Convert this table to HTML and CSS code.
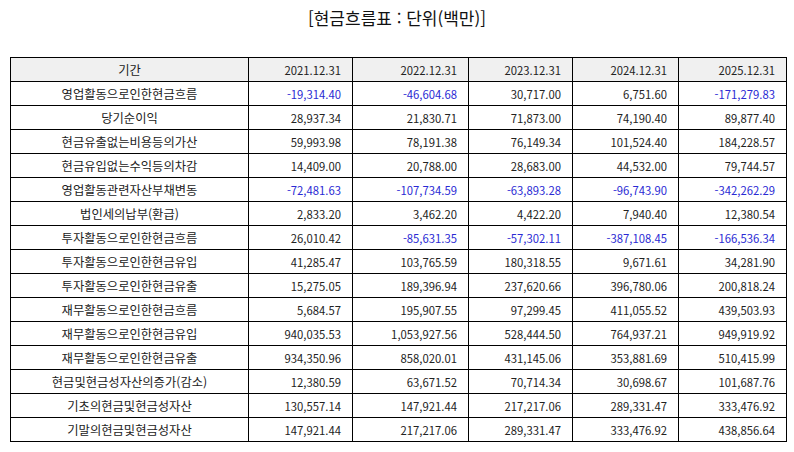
FILE: index.html
```html
<!DOCTYPE html>
<html lang="ko">
<head>
<meta charset="utf-8">
<link rel="stylesheet" href="styles.css">
</head>
<body>
<div class="page">
  <h1 class="title">[현금흐름표 : 단위(백만)]</h1>
  <table class="grid">
    <colgroup>
      <col class="c-label"><col class="c1"><col class="c2"><col class="c3"><col class="c4"><col class="c5">
    </colgroup>
    <thead>
      <tr><th class="lbl">기간</th><th>2021.12.31</th><th>2022.12.31</th><th>2023.12.31</th><th>2024.12.31</th><th>2025.12.31</th></tr>
    </thead>
    <tbody>
      <tr><td class="lbl">영업활동으로인한현금흐름</td><td class="neg">-19,314.40</td><td class="neg">-46,604.68</td><td>30,717.00</td><td>6,751.60</td><td class="neg">-171,279.83</td></tr>
      <tr><td class="lbl">당기순이익</td><td>28,937.34</td><td>21,830.71</td><td>71,873.00</td><td>74,190.40</td><td>89,877.40</td></tr>
      <tr><td class="lbl">현금유출없는비용등의가산</td><td>59,993.98</td><td>78,191.38</td><td>76,149.34</td><td>101,524.40</td><td>184,228.57</td></tr>
      <tr><td class="lbl">현금유입없는수익등의차감</td><td>14,409.00</td><td>20,788.00</td><td>28,683.00</td><td>44,532.00</td><td>79,744.57</td></tr>
      <tr><td class="lbl">영업활동관련자산부채변동</td><td class="neg">-72,481.63</td><td class="neg">-107,734.59</td><td class="neg">-63,893.28</td><td class="neg">-96,743.90</td><td class="neg">-342,262.29</td></tr>
      <tr><td class="lbl">법인세의납부(환급)</td><td>2,833.20</td><td>3,462.20</td><td>4,422.20</td><td>7,940.40</td><td>12,380.54</td></tr>
      <tr><td class="lbl">투자활동으로인한현금흐름</td><td>26,010.42</td><td class="neg">-85,631.35</td><td class="neg">-57,302.11</td><td class="neg">-387,108.45</td><td class="neg">-166,536.34</td></tr>
      <tr><td class="lbl">투자활동으로인한현금유입</td><td>41,285.47</td><td>103,765.59</td><td>180,318.55</td><td>9,671.61</td><td>34,281.90</td></tr>
      <tr><td class="lbl">투자활동으로인한현금유출</td><td>15,275.05</td><td>189,396.94</td><td>237,620.66</td><td>396,780.06</td><td>200,818.24</td></tr>
      <tr><td class="lbl">재무활동으로인한현금흐름</td><td>5,684.57</td><td>195,907.55</td><td>97,299.45</td><td>411,055.52</td><td>439,503.93</td></tr>
      <tr><td class="lbl">재무활동으로인한현금유입</td><td>940,035.53</td><td>1,053,927.56</td><td>528,444.50</td><td>764,937.21</td><td>949,919.92</td></tr>
      <tr><td class="lbl">재무활동으로인한현금유출</td><td>934,350.96</td><td>858,020.01</td><td>431,145.06</td><td>353,881.69</td><td>510,415.99</td></tr>
      <tr><td class="lbl">현금및현금성자산의증가(감소)</td><td>12,380.59</td><td>63,671.52</td><td>70,714.34</td><td>30,698.67</td><td>101,687.76</td></tr>
      <tr><td class="lbl">기초의현금및현금성자산</td><td>130,557.14</td><td>147,921.44</td><td>217,217.06</td><td>289,331.47</td><td>333,476.92</td></tr>
      <tr><td class="lbl">기말의현금및현금성자산</td><td>147,921.44</td><td>217,217.06</td><td>289,331.47</td><td>333,476.92</td><td>438,856.64</td></tr>
    </tbody>
  </table>
</div>
</body>
</html>
```

FILE: styles.css
```css
html, body {
  margin: 0;
  padding: 0;
  background: #ffffff;
}

.page {
  width: 794px;
  height: 452px;
  padding: 6px 0 0 10px;
  box-sizing: border-box;
  font-family: "Noto Sans CJK KR", "Noto Sans", sans-serif;
  color: #222222;
}

.title {
  margin: 0 0 0 -10px;
  width: 794px;
  text-align: center;
  font-size: 17px;
  font-weight: normal;
  line-height: 24px;
  color: #111111;
  height: 51px;
}

.grid {
  border-collapse: collapse;
  table-layout: fixed;
  width: 776px;
  font-size: 11.3px;
}

.c-label { width: 238px; }
.c1 { width: 104px; }
.c2 { width: 116px; }
.c3 { width: 104px; }
.c4 { width: 106px; }
.c5 { width: 108px; }

.grid th,
.grid td {
  border: 1px solid #000000;
  height: 24px;
  padding: 0 11px 0 6px;
  box-sizing: border-box;
  text-align: right;
  font-weight: normal;
  line-height: 14px;
  white-space: nowrap;
  color: #222222;
}

.grid thead th {
  background: #f0f0f0;
}

.grid .lbl {
  text-align: center;
  padding: 0 6px;
  font-size: 12.3px;
}

.grid td.neg {
  color: #2a2ad4;
}
```
